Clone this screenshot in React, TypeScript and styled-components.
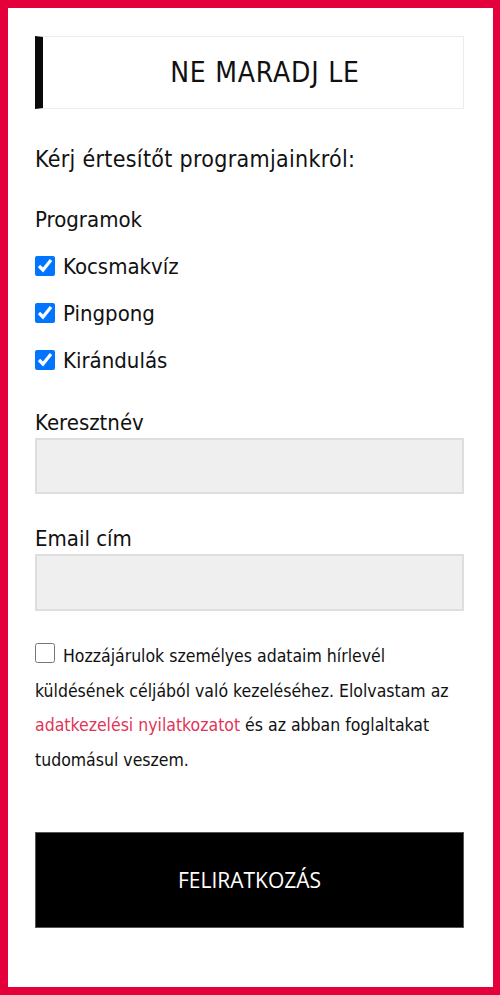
import styled, { createGlobalStyle } from "styled-components";

const GlobalStyle = createGlobalStyle`
  html, body {
    margin: 0;
    padding: 0;
    background: #fff;
  }
  * {
    box-sizing: border-box;
  }
`

const Frame = styled.main`
  min-height: 995px;
  border: 8px solid #e4003b;
  border-right-width: 7px;
  padding: 28px 29px 59px 27px;
  font-family: "DejaVu Sans Condensed", "DejaVu Sans", sans-serif;
  color: #111;
`

const TitleBox = styled.div`
  border: 1px solid #ececec;
  border-left: 8px solid #0a0a0a;
  padding: 19px 0 19px 24px;
  text-align: center;
`

const Title = styled.h2`
  margin: 0;
  font-size: 28px;
  font-weight: normal;
  line-height: 33px;
  letter-spacing: 0.8px;
`

const Lead = styled.p`
  margin: 37px 0 0;
  font-size: 23px;
  line-height: 27px;
  letter-spacing: 0.3px;
`

const GroupTitle = styled.div`
  margin-top: 34px;
  font-size: 22px;
  line-height: 26px;
`

const CheckList = styled.div`
  display: flex;
  flex-direction: column;
  gap: 21px;
  margin-top: 21px;
`

const CheckRow = styled.label`
  display: flex;
  align-items: center;
  gap: 8px;
  font-size: 22px;
  line-height: 26px;
`

const Box = styled.input`
  width: 20px;
  height: 20px;
  margin: 0 0 2px;
  flex: none;
`

const Field = styled.div<{ $top: number }>`
  margin-top: ${(p) => p.$top}px;
  display: flex;
  flex-direction: column;
  gap: 2px;
`

const FieldLabel = styled.label`
  font-size: 22px;
  line-height: 26px;
`

const TextInput = styled.input<{ $h: number }>`
  height: ${(p) => p.$h}px;
  width: 100%;
  background: #efefef;
  border: 2px solid #dedede;
  outline: none;
  font: inherit;
  padding: 0 12px;
`

const Consent = styled.p`
  margin: 28px 0 0;
  font-size: 17.5px;
  line-height: 34.5px;
`

const ConsentBox = styled.input`
  width: 20px;
  height: 20px;
  margin: 0 8px 0 0;
  vertical-align: -1px;
`

const Link = styled.a`
  color: #e0355a;
  text-decoration: none;
`

const Submit = styled.button`
  display: block;
  width: 100%;
  height: 96px;
  margin-top: 55px;
  background: #000;
  color: #fff;
  border: 1px solid #555;
  font-family: "Open Sans", sans-serif;
  font-size: 21px;
  cursor: pointer;
`

const programs = ["Kocsmakvíz", "Pingpong", "Kirándulás"];

function App() {
  return (
    <>
      <GlobalStyle />
      <Frame>
        <TitleBox>
          <Title>NE MARADJ LE</Title>
        </TitleBox>
        <Lead>Kérj értesítőt programjainkról:</Lead>
        <GroupTitle>Programok</GroupTitle>
        <CheckList>
          {programs.map((name) => (
            <CheckRow key={name}>
              <Box type="checkbox" defaultChecked />
              {name}
            </CheckRow>
          ))}
        </CheckList>
        <Field $top={36}>
          <FieldLabel>Keresztnév</FieldLabel>
          <TextInput type="text" $h={56} />
        </Field>
        <Field $top={32}>
          <FieldLabel>Email cím</FieldLabel>
          <TextInput type="email" $h={57} />
        </Field>
        <Consent>
          <ConsentBox type="checkbox" />
          Hozzájárulok személyes adataim hírlevél küldésének céljából való
          kezeléséhez. Elolvastam az{" "}
          <Link href="#">adatkezelési nyilatkozatot</Link> és az abban
          foglaltakat tudomásul veszem.
        </Consent>
        <Submit type="button">FELIRATKOZÁS</Submit>
      </Frame>
    </>
  );
}

export default App;
